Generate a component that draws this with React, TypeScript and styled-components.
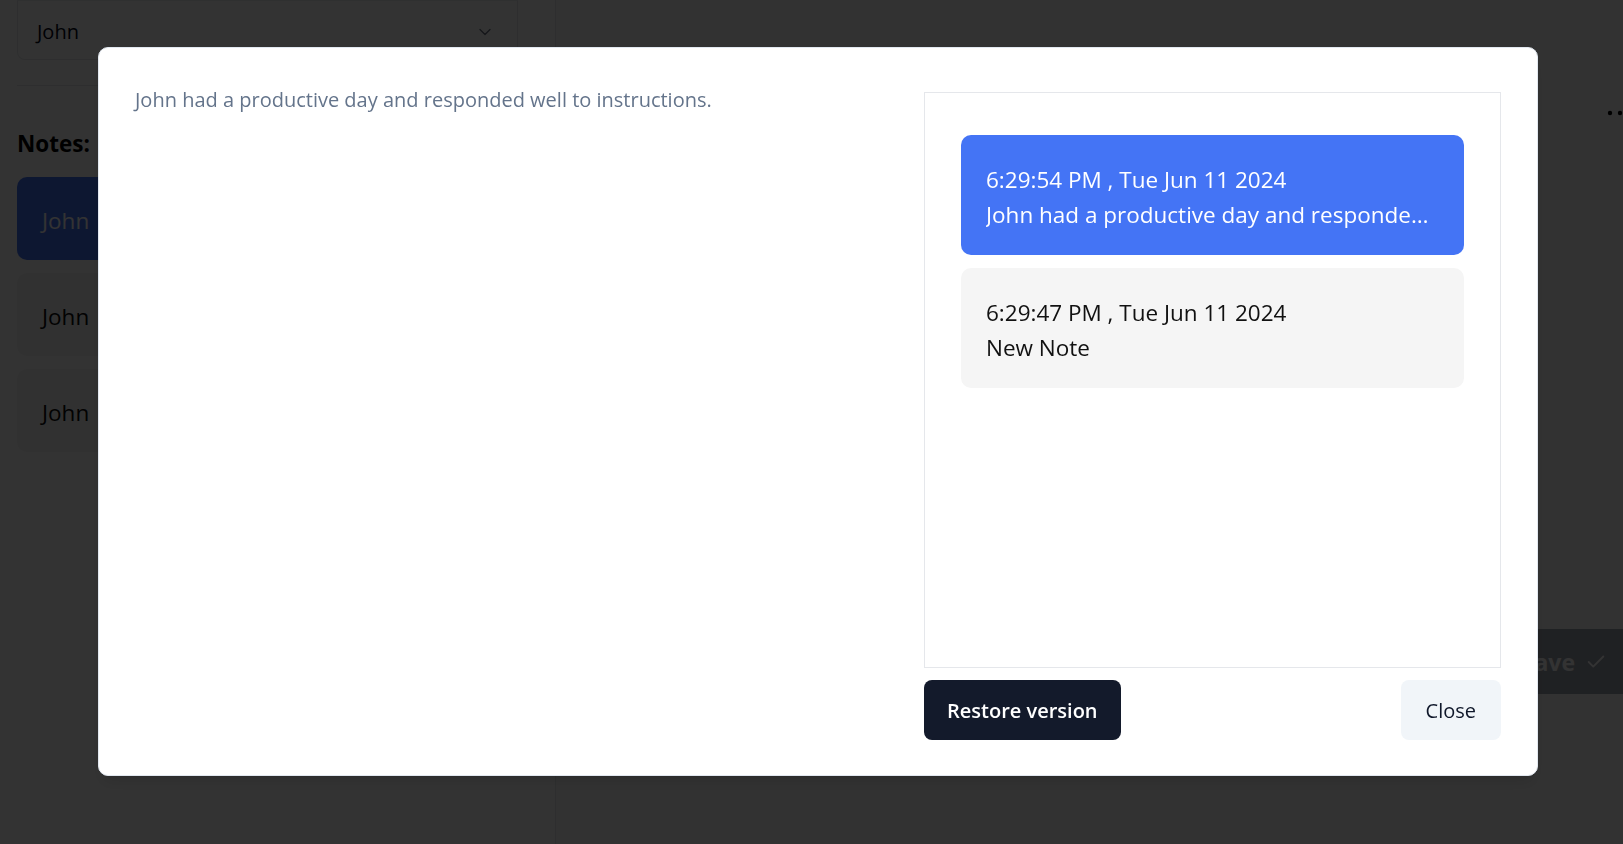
import React from "react";
import styled, { createGlobalStyle } from "styled-components";
import { ChevronDown, Check } from "lucide-react";

const Global = createGlobalStyle`
  html, body { margin: 0; padding: 0; }
  body {
    font-family: "Open Sans", "Noto Sans", sans-serif;
    background: #ffffff;
    color: #0f172a;
    overflow: hidden;
  }
  * { box-sizing: border-box; }
`;

const Page = styled.div`
  display: grid;
  grid-template-columns: 556px 1fr;
  height: 100vh;
  overflow: hidden;
`;

const Sidebar = styled.aside`
  border-right: 1px solid #e5e7eb;
  padding: 0 37px 0 17px;
  display: flex;
  flex-direction: column;
`;

const SelectBox = styled.div`
  height: 60px;
  border: 1px solid #e5e7eb;
  border-top-color: #eceef1;
  border-radius: 0 0 8px 8px;
  display: flex;
  align-items: center;
  justify-content: space-between;
  padding: 3px 22px 0 19px;
  font-size: 20px;
  color: #020617;
`;

const Divider = styled.hr`
  border: none;
  border-top: 1px solid #e5e7eb;
  margin: 25px 0 0;
`;

const NotesTitle = styled.h2`
  margin: 40px 0 0;
  font-size: 22.5px;
  font-weight: 700;
  line-height: 35px;
  color: #000;
`;

const NoteList = styled.div`
  margin-top: 16px;
  display: flex;
  flex-direction: column;
  gap: 13px;
`;

const NoteCard = styled.div<{ $active?: boolean }>`
  height: 83px;
  border-radius: 10px;
  padding: 3px 25px 0;
  display: flex;
  align-items: center;
  font-size: 22.5px;
  background: ${(p) => (p.$active ? "#4474f5" : "#f5f5f5")};
  color: ${(p) => (p.$active ? "#ffffff" : "#0a0a0a")};
`;

const Main = styled.main`
  display: flex;
  flex-direction: column;
  padding: 103px 0 150px 37px;
  background: #f7f7f9;
  overflow: hidden;
`;

const HeaderRow = styled.div`
  display: flex;
  justify-content: flex-end;
  height: 20px;
  align-items: center;
`;

const DotsButton = styled.div`
  margin-right: -19px;
  display: flex;
  align-items: center;
`;

const Editor = styled.div`
  flex: 1;
`;

const FooterRow = styled.div`
  display: flex;
  justify-content: flex-end;
`;

const SaveButton = styled.div`
  height: 65px;
  margin-right: -22px;
  padding: 0 38px 0 60px;
  display: flex;
  align-items: center;
  gap: 10px;
  background: #9ca3af;
  color: #ffffff;
  font-size: 23px;
  font-weight: 700;
`;

const Overlay = styled.div`
  position: fixed;
  inset: 0;
  background: rgba(0, 0, 0, 0.8);
`;

const Dialog = styled.div`
  position: fixed;
  left: 98px;
  top: 47px;
  width: 1440px;
  height: 729px;
  background: #ffffff;
  border: 1px solid #e2e8f0;
  border-radius: 10px;
  box-shadow: 0 10px 15px -3px rgba(0, 0, 0, 0.1), 0 4px 6px -4px rgba(0, 0, 0, 0.1);
  padding: 37px 36px 35px 36px;
  display: grid;
  grid-template-columns: 1fr 577px;
  gap: 40px;
`;

const Description = styled.p`
  margin: 0;
  font-size: 20px;
  line-height: 30px;
  color: #64748b;
`;

const HistoryColumn = styled.div`
  display: flex;
  flex-direction: column;
  padding-top: 7px;
  gap: 12px;
`;

const HistoryList = styled.div`
  flex: 1;
  border: 1px solid #e5e7eb;
  padding: 42px 36px;
  display: flex;
  flex-direction: column;
  gap: 13px;
`;

const VersionItem = styled.div<{ $selected?: boolean }>`
  border-radius: 10px;
  padding: 27px 25px 23px;
  font-size: 22.5px;
  line-height: 35px;
  background: ${(p) => (p.$selected ? "#4474f5" : "#f5f5f5")};
  color: ${(p) => (p.$selected ? "#ffffff" : "#111111")};
`;

const ItemLine = styled.div`
  white-space: nowrap;
  overflow: hidden;
  text-overflow: ellipsis;
`;

const ButtonRow = styled.div`
  display: flex;
  justify-content: space-between;
`;

const Button = styled.button<{ $variant: "primary" | "secondary" }>`
  height: 60px;
  padding: 0 ${(p) => (p.$variant === "primary" ? "23px" : "25px")};
  border: none;
  border-radius: 8px;
  font-family: inherit;
  font-size: 20px;
  font-weight: ${(p) => (p.$variant === "primary" ? 600 : 500)};
  background: ${(p) => (p.$variant === "primary" ? "#131a2b" : "#f1f5f9")};
  color: ${(p) => (p.$variant === "primary" ? "#ffffff" : "#0f172a")};
  cursor: pointer;
`;

const Dots = () => (
  <svg width="36" height="8" viewBox="0 0 36 8" fill="#000">
    <circle cx="4" cy="4" r="2.2" />
    <circle cx="14" cy="4" r="2.2" />
    <circle cx="24" cy="4" r="2.2" />
  </svg>
);

const versions = [
  {
    time: "6:29:54 PM , Tue Jun 11 2024",
    text: "John had a productive day and responded well to instructions.",
    selected: true,
  },
  { time: "6:29:47 PM , Tue Jun 11 2024", text: "New Note", selected: false },
];

export default function App() {
  return (
    <>
      <Global />
      <Page>
        <Sidebar>
          <SelectBox>
            <span>John</span>
            <ChevronDown size={20} color="#6b7280" strokeWidth={1.6} />
          </SelectBox>
          <Divider />
          <NotesTitle>Notes:</NotesTitle>
          <NoteList>
            <NoteCard $active>John</NoteCard>
            <NoteCard>John</NoteCard>
            <NoteCard>John</NoteCard>
          </NoteList>
        </Sidebar>
        <Main>
          <HeaderRow>
            <DotsButton>
              <Dots />
            </DotsButton>
          </HeaderRow>
          <Editor />
          <FooterRow>
            <SaveButton>
              <span>Save</span>
              <Check size={22} strokeWidth={2} />
            </SaveButton>
          </FooterRow>
        </Main>
      </Page>
      <Overlay />
      <Dialog role="dialog">
        <Description>
          John had a productive day and responded well to instructions.
        </Description>
        <HistoryColumn>
          <HistoryList>
            {versions.map((v) => (
              <VersionItem key={v.time} $selected={v.selected}>
                <ItemLine>{v.time}</ItemLine>
                <ItemLine>{v.text}</ItemLine>
              </VersionItem>
            ))}
          </HistoryList>
          <ButtonRow>
            <Button $variant="primary">Restore version</Button>
            <Button $variant="secondary">Close</Button>
          </ButtonRow>
        </HistoryColumn>
      </Dialog>
    </>
  );
}
